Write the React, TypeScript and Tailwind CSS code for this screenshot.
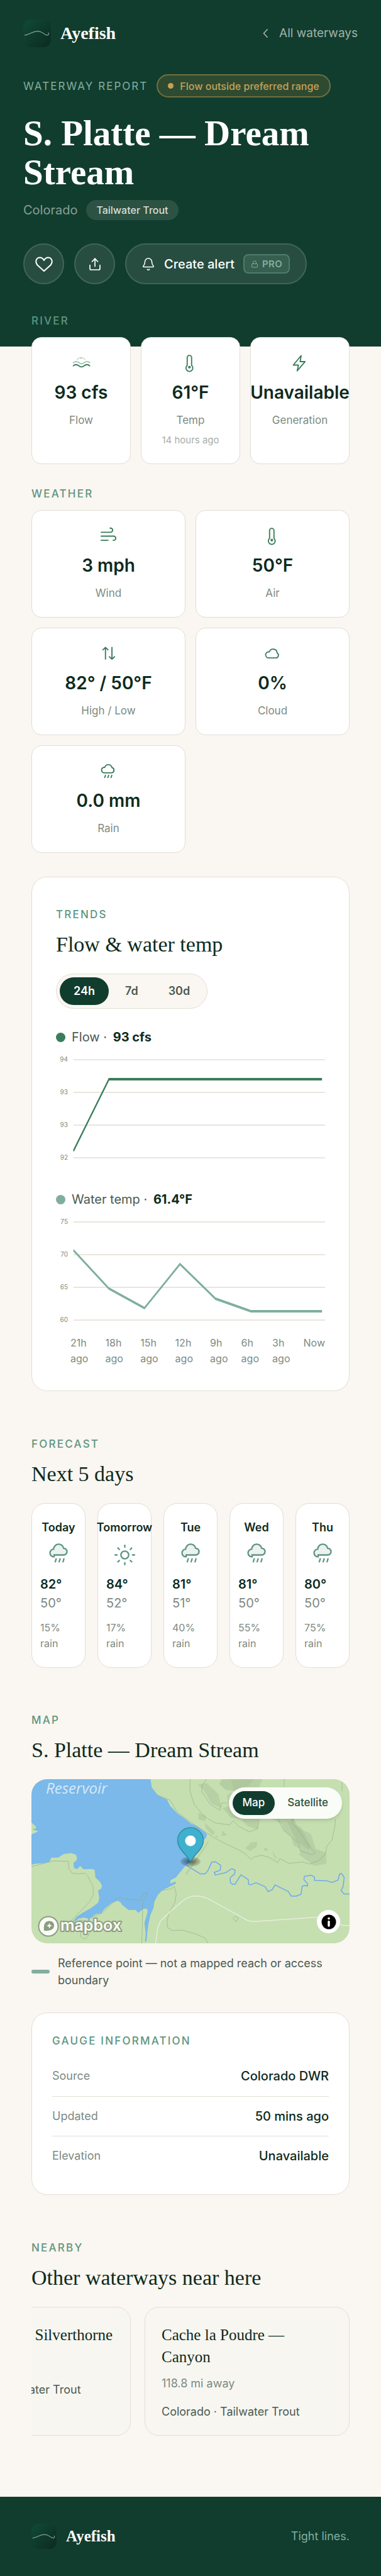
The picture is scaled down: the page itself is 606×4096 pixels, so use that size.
import { useState, type ReactNode } from 'react';
import { Bell, Lock } from 'lucide-react';

interface Stat {
  icon: ReactNode;
  value: string;
  label: string;
  note?: string;
}

interface ForecastDay {
  day: string;
  sky: 'rain' | 'sun';
  high: string;
  low: string;
  rain: string;
}

// Stat icons share one 72 unit grid
function StatIcon({ children }: { children: ReactNode }) {
  return (
    <svg
      viewBox="0 0 72 72"
      className="h-7 w-7 overflow-visible text-[#3a7d5a]"
      fill="none"
      stroke="currentColor"
      strokeWidth="4.8"
      strokeLinecap="round"
      strokeLinejoin="round"
      aria-hidden="true"
    >
      {children}
    </svg>
  );
}

const thermometer = (
  <StatIcon>
    <path d="M22.5 49V17a9 9 0 0 1 18 0v32a14 14 0 1 1-18 0z" />
    <circle cx="31.5" cy="56" r="5.5" fill="currentColor" stroke="none" />
  </StatIcon>
);

const riverStats: Stat[] = [
  {
    icon: (
      <StatIcon>
        <path d="M20 25Q36 8 52 25" opacity=".25" />
        <circle cx="36" cy="20" r="3" fill="currentColor" stroke="none" opacity=".35" />
        <path d="M4 38q6-5 11-5c10 0 14 9.5 22.5 9.5S50 33 60 33q6 0 11 5" opacity=".45" />
        <path d="M4 50.5q6-5 11-5c10 0 14 9.5 22.5 9.5S50 45.5 60 45.5q6 0 11 5" />
      </StatIcon>
    ),
    value: '93 cfs',
    label: 'Flow',
  },
  { icon: thermometer, value: '61°F', label: 'Temp', note: '14 hours ago' },
  {
    icon: (
      <StatIcon>
        <path d="M41 9 9 47.5h21L25 71l32-37.5H37z" />
      </StatIcon>
    ),
    value: 'Unavailable',
    label: 'Generation',
  },
];

const weatherStats: Stat[] = [
  {
    icon: (
      <StatIcon>
        <path d="M5 24h38.5a8.4 8.4 0 0 0 0-16.8h-2M5 40h51a8.4 8.4 0 0 1 0 17h-2M5 57h28" />
      </StatIcon>
    ),
    value: '3 mph',
    label: 'Wind',
  },
  { icon: thermometer, value: '50°F', label: 'Air' },
  {
    icon: (
      <StatIcon>
        <path d="M22.5 62V14M12 24l10.5-10L33 24M49 14v48M38.5 52 49 62l10.5-10" />
      </StatIcon>
    ),
    value: '82° / 50°F',
    label: 'High / Low',
  },
  {
    icon: (
      <StatIcon>
        <path d="M19 57a12.5 12.5 0 0 1 0-25h2.5a16.5 16.5 0 0 1 32 4.5A11.5 11.5 0 0 1 51 57z" />
      </StatIcon>
    ),
    value: '0%',
    label: 'Cloud',
  },
  {
    icon: (
      <StatIcon>
        <path d="M18 46a11.5 11.5 0 0 1 0-23h2a15 15 0 0 1 29 1.5A11 11 0 0 1 48 46z" />
        <path d="M22.5 56l-3 9M35.5 56l-3 9M48.5 56l-3 9" />
      </StatIcon>
    ),
    value: '0.0 mm',
    label: 'Rain',
  },
];

const forecast: ForecastDay[] = [
  { day: 'Today', sky: 'rain', high: '82°', low: '50°', rain: '15%' },
  { day: 'Tomorrow', sky: 'sun', high: '84°', low: '52°', rain: '17%' },
  { day: 'Tue', sky: 'rain', high: '81°', low: '51°', rain: '40%' },
  { day: 'Wed', sky: 'rain', high: '81°', low: '50°', rain: '55%' },
  { day: 'Thu', sky: 'rain', high: '80°', low: '50°', rain: '75%' },
];

const gauge = [
  { label: 'Source', value: 'Colorado DWR' },
  { label: 'Updated', value: '50 mins ago' },
  { label: 'Elevation', value: 'Unavailable' },
];

const hours = ['21h ago', '18h ago', '15h ago', '12h ago', '9h ago', '6h ago', '3h ago', 'Now'];

function Logo({ className }: { className: string }) {
  return (
    <svg viewBox="0 0 44 44" className={className} aria-hidden="true">
      <defs>
        <linearGradient id="logo" x1="0" y1="0" x2="1" y2="1">
          <stop offset="0" stopColor="#114a37" />
          <stop offset="1" stopColor="#0b2b1f" />
        </linearGradient>
      </defs>
      <rect width="44" height="44" rx="12" fill="url(#logo)" />
      <path
        d="M2.5 25C9 24 16 18.7 23 18.7S34 25 38.5 25c2 0 2.5-2 1.5-3.8"
        fill="none"
        stroke="#dfe8e2"
        strokeWidth=".8"
        strokeLinecap="round"
      />
    </svg>
  );
}

function Eyebrow({ children }: { children: ReactNode }) {
  return (
    <p className="text-[17px] leading-5 font-medium tracking-[0.13em] text-[#5f9580] uppercase">{children}</p>
  );
}

function SectionTitle({ children }: { children: ReactNode }) {
  return (
    <h2 className="mt-4 mb-6 font-['Liberation_Serif',serif] text-[34px] leading-11 text-[#0d2b20]">{children}</h2>
  );
}

function StatCard({ stat }: { stat: Stat }) {
  return (
    <div className="flex flex-col items-center rounded-2xl border border-[#e3ded5] bg-white py-[25px] whitespace-nowrap">
      {stat.icon}
      <p className="mt-[17px] text-[28px] leading-[34px] font-semibold text-[#0d2b20]">{stat.value}</p>
      <p className="mt-3.5 text-[17px] leading-[26px] text-[#7d8a82]">{stat.label}</p>
      {stat.note && <p className="mt-[7px] text-[15px] leading-6 text-[#a8aea6]">{stat.note}</p>}
    </div>
  );
}

function SkyIcon({ sky }: { sky: 'rain' | 'sun' }) {
  return (
    <svg
      viewBox="0 0 24 24"
      className="mx-auto mt-3 h-[37px] w-[37px] text-[#5f9580]"
      fill="none"
      stroke="currentColor"
      strokeWidth="1.5"
      aria-hidden="true"
    >
      {sky === 'sun' ? (
        <g strokeLinecap="round">
          <circle cx="12" cy="12" r="4" />
          <path d="M12 2v2M12 20v2M2 12h2M20 12h2M4.93 4.93l1.41 1.41M17.66 17.66l1.41 1.41M4.93 19.07l1.41-1.41M17.66 6.34l1.41-1.41" />
        </g>
      ) : (
        <>
          <path
            d="M7.2 13.9a4 4 0 0 1-.5-8A5.2 5.2 0 0 1 17 5.1a3.45 3.45 0 0 1 0 6.9H7.2z"
            fill="currentColor"
            fillOpacity=".12"
          />
          <path d="M9.3 16l-.9 3M13.3 16l-.9 3M17.3 16l-.9 3" strokeLinecap="round" />
        </>
      )}
    </svg>
  );
}

interface ChartProps {
  name: string;
  value: string;
  dot: string;
  stroke: string;
  ticks: string[];
  points: number[];
}

function Chart({ name, value, dot, stroke, ticks, points }: ChartProps) {
  // the plot starts at 62 and its last sample sits 11 short of the right edge
  const line = points.map((y, i) => `${62 + i * 125.9},${y}`).join(' ');

  return (
    <div>
      <div className="flex h-8 items-center gap-2.5 text-xl text-[#4a5a52]">
        <span className={`h-[15px] w-[15px] rounded-full ${dot}`} />
        <p>
          {name} · <strong className="ml-1 font-bold text-[#0d2b20]">{value}</strong>
        </p>
      </div>
      <div className="relative mt-1">
        <svg viewBox="0 0 954 190" preserveAspectRatio="none" className="block h-[190px] w-full" aria-hidden="true">
          {[16, 68, 120, 172].map((y) => (
            <line key={y} x1="62" x2="954" y1={y} y2={y} stroke="#e3ded5" strokeWidth="1.5" />
          ))}
          <polyline points={line} fill="none" stroke={stroke} strokeWidth="3.9" />
        </svg>
        <div className="absolute top-[-11px] left-0 w-[19px] text-right text-[10px] leading-[52px] text-[#7d8a82]">
          {ticks.map((tick, i) => (
            <p key={i}>{tick}</p>
          ))}
        </div>
      </div>
    </div>
  );
}

function TerrainMap() {
  return (
    <svg
      viewBox="130 456 1309 877"
      preserveAspectRatio="none"
      className="block h-full w-full"
      fill="none"
      aria-hidden="true"
    >
      <rect x="130" y="456" width="1309" height="877" fill="#c5dfb0" />
      <g fill="#b8d0a5">
        <path d="M895 456h185l-15 50-40 30 45 60-10 130-40-20-30-40-40-5-30-45-50-30-30-70-25-30 35-10 50 60 10 75 30-10-5-60 30-20-15-65z" />
        <path d="M1120 668h90l20 50 50 30 20 80 43 20v60l-50 12-60-60 5-30-30-20-10-50-28-25-10-40z" />
        <path d="M1010 825l25-32 25-3-5 30-25 20zM817 635l30 15v30l-30-8zM845 690l40 50-10 15-30-40zM915 730l20 25-22 5z" />
        <path d="M857 786l3 8-90 172-8-2zM1118 835l25 45-12-5zM1088 822l12 2 2 14-14 2zM885 757l15 5-10 8z" />
      </g>
      <path d="M915 456h130l-20 35-50 30-45-8-28-32zM1180 675l60 40 40 100-10 20-50-50z" fill="#a9c197" opacity=".6" />
      <path
        d="M130 456H620L625 500 650 542 688 565 700 597 730 638 765 670 785 692 815 710 845 740 853 752 848 770 836 785 800 860 783 900 766 915 724 982 703 995 700 1015 722 1003 725 1013 700 1030 668 1050 650 1075 636 1110 632 1145 620 1180 610 1240 603 1325 597 1322 600 1280 595 1225 608 1165 605 1147 590 1150 570 1170 558 1155 530 1155 505 1130 495 1112 484 1105 460 1118 430 1150 418 1172 395 1178 372 1198 365 1222 362 1200 345 1195 325 1200 310 1215 292 1222 305 1210 315 1192 340 1170 375 1145 405 1115 409 1090 404 1052 418 1040 420 1022 412 1005 393 980 390 940 378 936 345 937 330 920 318 937 305 930 303 905 318 885 314 860 293 851 262 857 240 875 212 875 205 896 180 905 145 908 130 913V752L158 735 133 722 148 720 148 708 130 688z"
        fill="#7ab9ea"
      />
      <g stroke="#8fa58a" strokeOpacity=".6" strokeWidth="1">
        <path vectorEffect="non-scaling-stroke" d="M130 923 220 893 282 895 284 935 297 957 325 962 350 958 362 975 384 1030 384 1075 370 1110 292 1215" />
        <path vectorEffect="non-scaling-stroke" d="M335 1300c-10-20 12-50 15-88l-25-3M335 1300c10 15 20 10 28-6l14-40" />
        <path vectorEffect="non-scaling-stroke" d="M372 1198 420 1172 485 1090 503 1090 522 1098 578 1102 590 1068 606 1061 604 1080 587 1105V1200L584 1333" />
        <path vectorEffect="non-scaling-stroke" d="M650 542 700 568 730 632 790 690 880 768 920 795 980 832 1005 850 1035 885 1048 870 1080 863 1110 875 1143 902 1152 880 1190 906 1245 898 1275 910 1312 890 1340 855 1345 815 1367 780 1380 700V668" />
        <path vectorEffect="non-scaling-stroke" d="M783 456 782 520 800 590 840 655 885 690 945 700 960 678 985 710 1028 738 1060 720 1068 668M850 456 832 490 830 520 865 590 905 622 912 583 935 583" />
        <path vectorEffect="non-scaling-stroke" d="M1170 456V498M1408 456V520M1145 668 1165 725 1230 800 1235 838 1285 860 1298 850 1270 810 1235 740 1210 698 1200 685 1203 668 1212 690" />
        <path vectorEffect="non-scaling-stroke" d="M668 1050 705 1042 718 1030 726 1070 720 1115 695 1175 688 1215 690 1248 710 1265 750 1263 800 1280 845 1305 856 1333M960 1200l10-14 12 12-10 20z" />
      </g>
      <path
        vectorEffect="non-scaling-stroke"
        stroke="#e6ecdc"
        strokeWidth="1.5"
        d="M641 1333 650 1250 660 1215 700 1165 760 1098 790 1081 820 1080 850 1090 1020 1211 1042 1217 1310 1193M1398 1233 1415 1238H1439"
      />
      <path
        vectorEffect="non-scaling-stroke"
        stroke="#6fa8ee"
        strokeWidth="1.5"
        strokeLinejoin="round"
        d="M766 915 825 962h20l10-15 17-48 15-2 22 20-2 25-25 12 5 14 45-14 22-20 14 8-2 20-18 20v25l8 10h12l24-50 30 25 2 25 8 4 22-12 38 22 12 26 18-12 10-24 55 35 12 25h20l20-10 5-42 10-5 12 3v-12l-15-22 2-18 27-6 15 10v18l50 2 22 8 25-12 5-30 8-6 12 22-5 50-8 20 12 18h20l28 14 15 25"
      />
    </svg>
  );
}

function MapPanel() {
  const [view, setView] = useState('Map');

  return (
    <div className="relative h-[261px] overflow-hidden rounded-[25px]">
      <TerrainMap />
      <p className="absolute top-0 left-[23px] font-['Open_Sans',sans-serif] text-2xl leading-7 text-white/70 italic">
        Reservoir
      </p>

      <div className="absolute top-[13px] right-3 flex rounded-full bg-[#fafcf7] p-1.5 shadow-md">
        {['Map', 'Satellite'].map((name) => (
          <button
            key={name}
            type="button"
            aria-pressed={view === name}
            onClick={() => setView(name)}
            className={`h-[38px] rounded-full px-4 text-[17px] font-medium ${
              view === name ? 'bg-[#113d2e] text-white' : 'ml-1 text-[#2c5443]'
            }`}
          >
            {name}
          </button>
        ))}
      </div>

      <svg viewBox="0 0 44 64" className="absolute top-[75px] left-1/2 h-16 w-11 -translate-x-1/2" aria-hidden="true">
        <defs>
          <radialGradient id="shade">
            <stop offset="0" stopColor="#000" stopOpacity=".55" />
            <stop offset="1" stopColor="#000" stopOpacity=".1" />
          </radialGradient>
        </defs>
        <ellipse cx="22" cy="56" rx="16" ry="8" fill="url(#shade)" />
        <path
          d="M22 56C17 46 1.5 36 1.5 22.5a20.5 20.5 0 0 1 41 0C42.5 36 27 46 22 56z"
          fill="#3fb1ce"
          stroke="#318da4"
          strokeWidth="1.5"
        />
        <circle cx="22" cy="23" r="8.5" fill="#fff" />
      </svg>

      <a href="#mapbox" aria-label="Mapbox" className="absolute bottom-2.5 left-2.5">
        <svg viewBox="0 0 138 34" className="h-[34px] w-[138px]" aria-hidden="true">
          <circle cx="17" cy="17" r="15.5" fill="#fafcf7" stroke="#8d9c80" strokeWidth="2" />
          <path d="M10 24c-1-9 1-15 8-15.5 5-.2 8 3 8 7 0 7-7 9-16 8.5z" fill="#8d9c80" />
          <path d="M18.5 11.5l1.3 3.2 3.2 1.3-3.2 1.3-1.3 3.2-1.3-3.2-3.2-1.3 3.2-1.3z" fill="#fafcf7" />
          <text
            x="36"
            y="24"
            fontFamily="Inter, sans-serif"
            fontSize="25"
            fontWeight="600"
            fill="#fafcf7"
            stroke="#8d9c80"
            strokeWidth="4"
            strokeLinejoin="round"
            paintOrder="stroke"
          >
            mapbox
          </text>
        </svg>
      </a>

      <button
        type="button"
        aria-label="Map attribution"
        className="absolute right-[15px] bottom-4 flex h-[37px] w-[37px] items-center justify-center rounded-full bg-white"
      >
        <svg viewBox="0 0 24 24" className="h-6 w-6" aria-hidden="true">
          <circle cx="12" cy="12" r="11.5" />
          <circle cx="12" cy="6.5" r="1.8" fill="#fff" />
          <path d="M12 11.5v6.5" stroke="#fff" strokeWidth="3.4" strokeLinecap="round" />
        </svg>
      </button>
    </div>
  );
}

interface NearbyProps {
  title: string;
  distance?: string;
}

function NearbyCard({ title, distance }: NearbyProps) {
  return (
    <a
      href="#waterway"
      className="block w-[326px] shrink-0 rounded-[22px] border border-[#e3ded5] bg-[#f7f6f1] px-[26px] pt-[26px] pb-6"
    >
      <h3 className="font-['Liberation_Serif',serif] text-[25px] leading-[35px] text-[#0d2b20]">{title}</h3>
      <p className="mt-[11px] min-h-[27px] text-lg leading-[27px] text-[#7d8a82]">{distance}</p>
      <p className="mt-[18px] text-lg leading-[27px] text-[#4a5a52]">Colorado · Tailwater Trout</p>
    </a>
  );
}

export default function App() {
  const [range, setRange] = useState('24h');

  return (
    <div className="min-h-screen bg-[#faf6f1] font-['Inter',sans-serif]">
      <header className="bg-[#113d2e] px-[37px] pt-[31px] pb-[99px] text-white">
        <nav className="flex items-center justify-between">
          <a href="#home" className="flex items-center gap-[15px]">
            <Logo className="h-11 w-11" />
            <span className="font-['Liberation_Serif',serif] text-[28px] leading-9 font-bold">Ayefish</span>
          </a>
          <a href="#waterways" className="flex items-center gap-[18px] text-[19px] text-white/60">
            <svg
              viewBox="0 0 8 14"
              className="h-3.5 w-2"
              fill="none"
              stroke="currentColor"
              strokeWidth="1.7"
              strokeLinecap="round"
              aria-hidden="true"
            >
              <path d="M7 1 1.5 7 7 13" />
            </svg>
            All waterways
          </a>
        </nav>

        <div className="mt-[43px] flex items-center gap-3.5">
          <p className="text-[17px] leading-5 tracking-[0.12em] text-[#82ae9e]">WATERWAY REPORT</p>
          <p className="flex h-[37px] items-center gap-2.5 rounded-full border-2 border-[#6f7040] bg-[#2e4b32] px-4 text-base font-medium whitespace-nowrap text-[#c3a257]">
            <span className="h-[9px] w-[9px] rounded-full bg-[#c3a257]" />
            Flow outside preferred range
          </p>
        </div>

        <h1 className="mt-[26px] font-['Liberation_Serif',serif] text-[57px] leading-[62px] font-bold">
          S. Platte — Dream Stream
        </h1>

        <div className="mt-[13px] flex items-center gap-3.5">
          <p className="text-xl leading-8 text-white/50">Colorado</p>
          <p className="rounded-full bg-[#2c5243] px-4 text-base leading-8 font-medium text-[#d5dfd8]">
            Tailwater Trout
          </p>
        </div>

        <div className="mt-[37px] flex gap-4">
          <button
            type="button"
            aria-label="Save waterway"
            className="flex h-[65px] w-[65px] items-center justify-center rounded-full border-2 border-[#42645a] bg-[#274d40]"
          >
            <svg
              viewBox="0 0 28 24"
              className="h-6 w-7"
              fill="none"
              stroke="currentColor"
              strokeWidth="2"
              strokeLinejoin="round"
              aria-hidden="true"
            >
              <path d="M14 23 3.5 13.5C-1 8 2 1.5 7.5 1.5c3 0 5 1.8 6.5 4.5 1.5-2.7 3.5-4.5 6.5-4.5 5.5 0 8.5 6.5 4 12z" />
            </svg>
          </button>
          <button
            type="button"
            aria-label="Share waterway"
            className="flex h-[65px] w-[65px] items-center justify-center rounded-full border-2 border-[#42645a] bg-[#274d40]"
          >
            <svg
              viewBox="0 0 20 20"
              className="h-5 w-5"
              fill="none"
              stroke="currentColor"
              strokeWidth="1.7"
              strokeLinecap="round"
              strokeLinejoin="round"
              aria-hidden="true"
            >
              <path d="M10 13.5V1.2M5.5 6 10 1.2 14.5 6M2 11.5V17a2 2 0 0 0 2 2h12a2 2 0 0 0 2-2v-5.5" />
            </svg>
          </button>
          <button
            type="button"
            className="flex h-[65px] items-center rounded-full border-2 border-[#42645a] bg-[#274d40] pr-[25px] pl-6 text-xl font-medium"
          >
            <Bell className="h-[22px] w-[22px]" strokeWidth={1.7} />
            <span className="ml-3.5">Create alert</span>
            <span className="ml-3.5 flex h-[31px] items-center gap-1.5 rounded-lg border-2 border-[#4e7c6b] bg-[#365f50] px-2.5 text-[15px] font-semibold tracking-wide text-[#82ae9e]">
              <Lock className="h-3 w-3" />
              PRO
            </span>
          </button>
        </div>
      </header>

      <main className="relative -mt-[51px] px-[50px]">
        <section>
          <Eyebrow>River</Eyebrow>
          <div className="mt-4 grid grid-cols-3 gap-4">
            {riverStats.map((stat) => (
              <StatCard key={stat.label} stat={stat} />
            ))}
          </div>
        </section>

        <section className="mt-[37px]">
          <Eyebrow>Weather</Eyebrow>
          <div className="mt-4 grid grid-cols-2 gap-4">
            {weatherStats.map((stat) => (
              <StatCard key={stat.label} stat={stat} />
            ))}
          </div>
        </section>

        <section className="mt-[38px] rounded-[25px] border border-[#e3ded5] bg-white px-[38px] pt-[49px] pb-[38px]">
          <Eyebrow>Trends</Eyebrow>
          <SectionTitle>Flow &amp; water temp</SectionTitle>
          <div className="mb-[29px] inline-flex gap-1 rounded-full border border-[#e3ded5] bg-[#faf6f1] p-[5px]">
            {['24h', '7d', '30d'].map((name) => (
              <button
                key={name}
                type="button"
                aria-pressed={range === name}
                onClick={() => setRange(name)}
                className={`h-11 rounded-full px-[22px] text-lg font-semibold ${
                  range === name ? 'bg-[#113d2e] text-white' : 'text-[#4a5a52]'
                }`}
              >
                {name}
              </button>
            ))}
          </div>
          <Chart
            name="Flow"
            value="93 cfs"
            dot="bg-[#3a7d5a]"
            stroke="#3a7d5a"
            ticks={['94', '93', '93', '92']}
            points={[161, 47, 47, 47, 47, 47, 47, 47]}
          />
          <div className="mt-8">
            <Chart
              name="Water temp"
              value="61.4°F"
              dot="bg-[#7fae9e]"
              stroke="#7fae9e"
              ticks={['75', '70', '65', '60']}
              points={[61, 122, 153, 83, 138, 158, 158, 158]}
            />
          </div>
          <div className="mt-1.5 flex justify-between pl-[23px] text-base leading-[25px] text-[#7d8a82]">
            {hours.map((hour) => (
              <span key={hour}>{hour}</span>
            ))}
          </div>
        </section>

        <section className="mt-[74px]">
          <Eyebrow>Forecast</Eyebrow>
          <SectionTitle>Next 5 days</SectionTitle>
          <div className="grid grid-cols-5 gap-[19px]">
            {forecast.map((item) => (
              <div key={item.day} className="rounded-[22px] border border-[#e3ded5] bg-white px-[13px] pt-6 pb-[25px]">
                <h3 className="-mx-5 text-center text-lg leading-[27px] font-semibold text-[#0d2b20]">{item.day}</h3>
                <SkyIcon sky={item.sky} />
                <p className="mt-[13px] text-xl leading-[30px] font-semibold text-[#0d2b20]">{item.high}</p>
                <p className="text-xl leading-[30px] text-[#7d8a82]">{item.low}</p>
                <p className="mt-3 text-base leading-[25px] text-[#7d8a82]">
                  {item.rain}
                  <br />
                  rain
                </p>
              </div>
            ))}
          </div>
        </section>

        <section className="mt-[73px]">
          <Eyebrow>Map</Eyebrow>
          <SectionTitle>S. Platte — Dream Stream</SectionTitle>
          <MapPanel />
          <div className="mt-[18px] flex items-center gap-[13px]">
            <span className="h-[6px] w-[29px] shrink-0 rounded-full bg-[#82ae9e]" />
            <p className="text-lg leading-[27px] text-[#4a5a52]">
              Reference point — not a mapped reach or access boundary
            </p>
          </div>
        </section>

        <section className="mt-[38px] rounded-[25px] border border-[#e3ded5] bg-white px-8 pt-[34px] pb-[30px]">
          <Eyebrow>Gauge information</Eyebrow>
          <table className="mt-[15px] w-full border-collapse">
            <tbody>
              {gauge.map((row) => (
                <tr key={row.label} className="h-[63px] border-b border-[#e3ded5] last:border-b-0">
                  <th scope="row" className="text-left text-lg font-normal text-[#7d8a82]">
                    {row.label}
                  </th>
                  <td className="text-right text-xl font-medium text-[#0d2b20]">{row.value}</td>
                </tr>
              ))}
            </tbody>
          </table>
        </section>

        <section className="mt-[74px]">
          <Eyebrow>Nearby</Eyebrow>
          <SectionTitle>Other waterways near here</SectionTitle>
          <div className="flex justify-end gap-[22px] overflow-hidden">
            <NearbyCard title="Blue River — Silverthorne" />
            <NearbyCard title="Cache la Poudre — Canyon" distance="118.8 mi away" />
          </div>
        </section>
      </main>

      <footer className="mt-[97px] flex items-center justify-between bg-[#113d2e] px-[50px] py-[43px]">
        <a href="#home" className="flex items-center gap-[15px] text-white">
          <Logo className="h-10 w-10" />
          <span className="font-['Liberation_Serif',serif] text-[25px] leading-8 font-bold">Ayefish</span>
        </a>
        <p className="text-lg text-[#82ae9e]">Tight lines.</p>
      </footer>
    </div>
  );
}
